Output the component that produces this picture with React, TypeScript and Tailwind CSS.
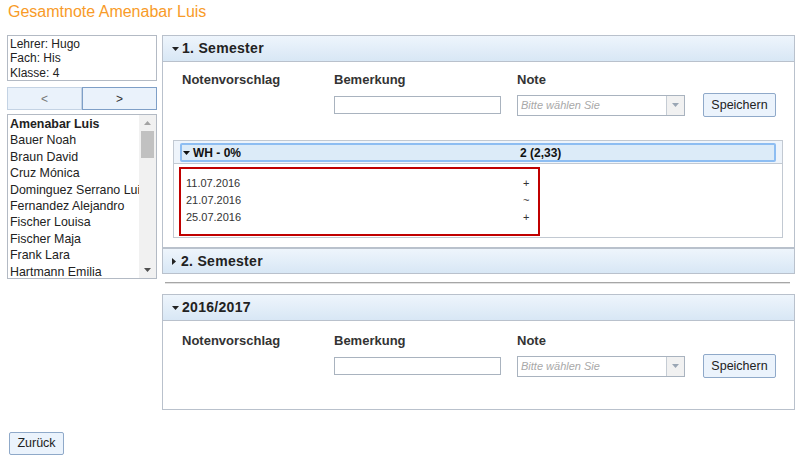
import React from 'react';

const students = [
  'Amenabar Luis',
  'Bauer Noah',
  'Braun David',
  'Cruz Mónica',
  'Dominguez Serrano Luis',
  'Fernandez Alejandro',
  'Fischer Louisa',
  'Fischer Maja',
  'Frank Lara',
  'Hartmann Emilia',
];

const entries = [
  { date: '11.07.2016', mark: '+' },
  { date: '21.07.2016', mark: '~' },
  { date: '25.07.2016', mark: '+' },
];

function CaretDown({ color = '#222' }: { color?: string }) {
  return (
    <svg width="7" height="4" viewBox="0 0 7 4" className="shrink-0">
      <path d="M0 0h7L3.5 4z" fill={color} />
    </svg>
  );
}

function CaretRight() {
  return (
    <svg width="4" height="7" viewBox="0 0 4 7" className="shrink-0">
      <path d="M0 0v7l4-3.5z" fill="#222" />
    </svg>
  );
}

function PanelHeader({ title, open, bordered }: { title: string; open: boolean; bordered?: boolean }) {
  return (
    <div
      className={`flex items-center pl-[9px] bg-gradient-to-b from-[#eef5fc] to-[#d8e7f5] ${
        bordered ? 'h-[26px] border-b border-[#b9c1cc]' : 'h-[24px]'
      }`}
    >
      {open ? <CaretDown /> : <CaretRight />}
      <span className={`${open ? 'ml-[3px]' : 'ml-[5px]'} text-[14px] font-bold tracking-[0.3px] text-[#222]`}>
        {title}
      </span>
    </div>
  );
}

function GradeForm() {
  return (
    <div className="pl-[19px]">
      <div className="flex h-[16px] items-center text-[13px] leading-[16px] font-bold text-[#333]">
        <div className="w-[152px]">Notenvorschlag</div>
        <div className="w-[183px]">Bemerkung</div>
        <div className="w-[186px]">Note</div>
      </div>
      <div className="flex h-[24px] items-center mt-[5px]">
        <div className="w-[152px]" />
        <div className="w-[183px]">
          <div className="w-[167px] h-[18px] border border-[#a9b3bf] bg-white" />
        </div>
        <div className="w-[186px]">
          <div className="flex w-[168px] h-[21px] border border-[#a9b3bf] bg-white">
            <div className="flex-1 flex items-center pl-[3px] text-[11px] italic text-[#a8a8a8]">Bitte wählen Sie</div>
            <div className="w-[18px] flex items-center justify-center border-l border-[#c5ccd4] bg-[#f1f1f1]">
              <CaretDown color="#9aa6b4" />
            </div>
          </div>
        </div>
        <button className="w-[73px] h-[24px] rounded-[2px] border border-[#8fa9c9] bg-[#ebf3fc] text-[12.5px] text-[#222]">
          Speichern
        </button>
      </div>
    </div>
  );
}

export default function App() {
  return (
    <div className="w-[801px] h-[458px] bg-white overflow-hidden" style={{ fontFamily: '"Liberation Sans", Arial, sans-serif' }}>
      <div className="pl-[8px] pt-[2px] text-[16px] leading-[20px] text-[#f89b28]">Gesamtnote Amenabar Luis</div>

      <div className="flex mt-[13px] pl-[7px]">
        {/* left column */}
        <div className="w-[150px]">
          <div className="h-[46px] border border-[#b3bac4] pl-[2px] pt-[1px] text-[12px] leading-[14.3px] text-[#222]">
            <div>Lehrer: Hugo</div>
            <div>Fach: His</div>
            <div>Klasse: 4</div>
          </div>
          <div className="flex h-[23px] mt-[6px] text-[12px]">
            <button className="w-[75px] border border-[#c4d3e4] bg-[#eaf2fb] text-[#777]">&lt;</button>
            <button className="w-[75px] border border-[#7e9fc7] bg-[#eaf2fb] text-[#333]">&gt;</button>
          </div>
          <div className="flex h-[165px] mt-[4px] border border-[#b3bac4] overflow-hidden">
            <div className="flex-1 overflow-hidden pl-[2px] pt-[1px] text-[12.4px] leading-[16.4px] text-[#222]">
              {students.map((s, i) => (
                <div key={s} className={`whitespace-nowrap ${i === 0 ? 'font-bold' : ''}`}>
                  {s}
                </div>
              ))}
            </div>
            <div className="w-[17px] flex flex-col items-center bg-[#f1f1f1]">
              <div className="h-[16px] flex items-center justify-center">
                <svg width="7" height="4" viewBox="0 0 7 4">
                  <path d="M3.5 0L7 4H0z" fill="#a3a3a3" />
                </svg>
              </div>
              <div className="w-[13px] h-[27px] bg-[#c1c1c1]" />
              <div className="flex-1" />
              <div className="h-[16px] flex items-center justify-center">
                <CaretDown color="#505050" />
              </div>
            </div>
          </div>
        </div>

        {/* right column */}
        <div className="ml-[5px] w-[633px]">
          <div className="border border-[#b9c1cc]">
            <PanelHeader title="1. Semester" open bordered />
            <div className="pt-[10px] pb-[9px]">
              <GradeForm />
              <div className="mt-[23px] ml-[10px] mr-[11px] border border-[#c2c9d2]">
                <div className="h-[23px] border-b border-[#c2c9d2] bg-[#eef4fb] pt-[2px] px-[6px]">
                  <div className="flex items-center h-[19px] border-2 border-[#8dbdf2] rounded-[2px] bg-[#dcebf8] text-[12px] font-bold text-[#111]">
                    <div className="flex items-center w-[338px] pl-[1px]">
                      <CaretDown color="#111" />
                      <span className="ml-[3px]">WH - 0%</span>
                    </div>
                    <span>2 (2,33)</span>
                  </div>
                </div>
                <div className="pt-[3px] pb-[1px] pl-[5px]">
                  <div className="w-[361px] h-[69px] border-2 border-[#c00000] pl-[5px] pt-[6px] text-[11px] leading-[17px] text-[#333]">
                    {entries.map((e) => (
                      <div key={e.date} className="flex">
                        <div className="w-[337px]">{e.date}</div>
                        <div>{e.mark}</div>
                      </div>
                    ))}
                  </div>
                </div>
              </div>
            </div>
          </div>

          <div className="border border-[#b9c1cc]">
            <PanelHeader title="2. Semester" open={false} />
          </div>

          <div className="mt-[8px] ml-[3px] mr-[5px] h-[2px] border-t border-[#a6a6a6] border-b border-b-[#e2e2e2]" />

          <div className="mt-[10px] border border-[#b9c1cc]">
            <PanelHeader title="2016/2017" open bordered />
            <div className="pt-[12px] pb-[31px]">
              <GradeForm />
            </div>
          </div>
        </div>
      </div>

      <div className="pl-[9px] mt-[20px]">
        <button className="w-[55px] h-[23px] rounded-[2px] border border-[#8fa9c9] bg-[#ebf3fc] text-[12.5px] text-[#222]">
          Zurück
        </button>
      </div>
    </div>
  );
}
